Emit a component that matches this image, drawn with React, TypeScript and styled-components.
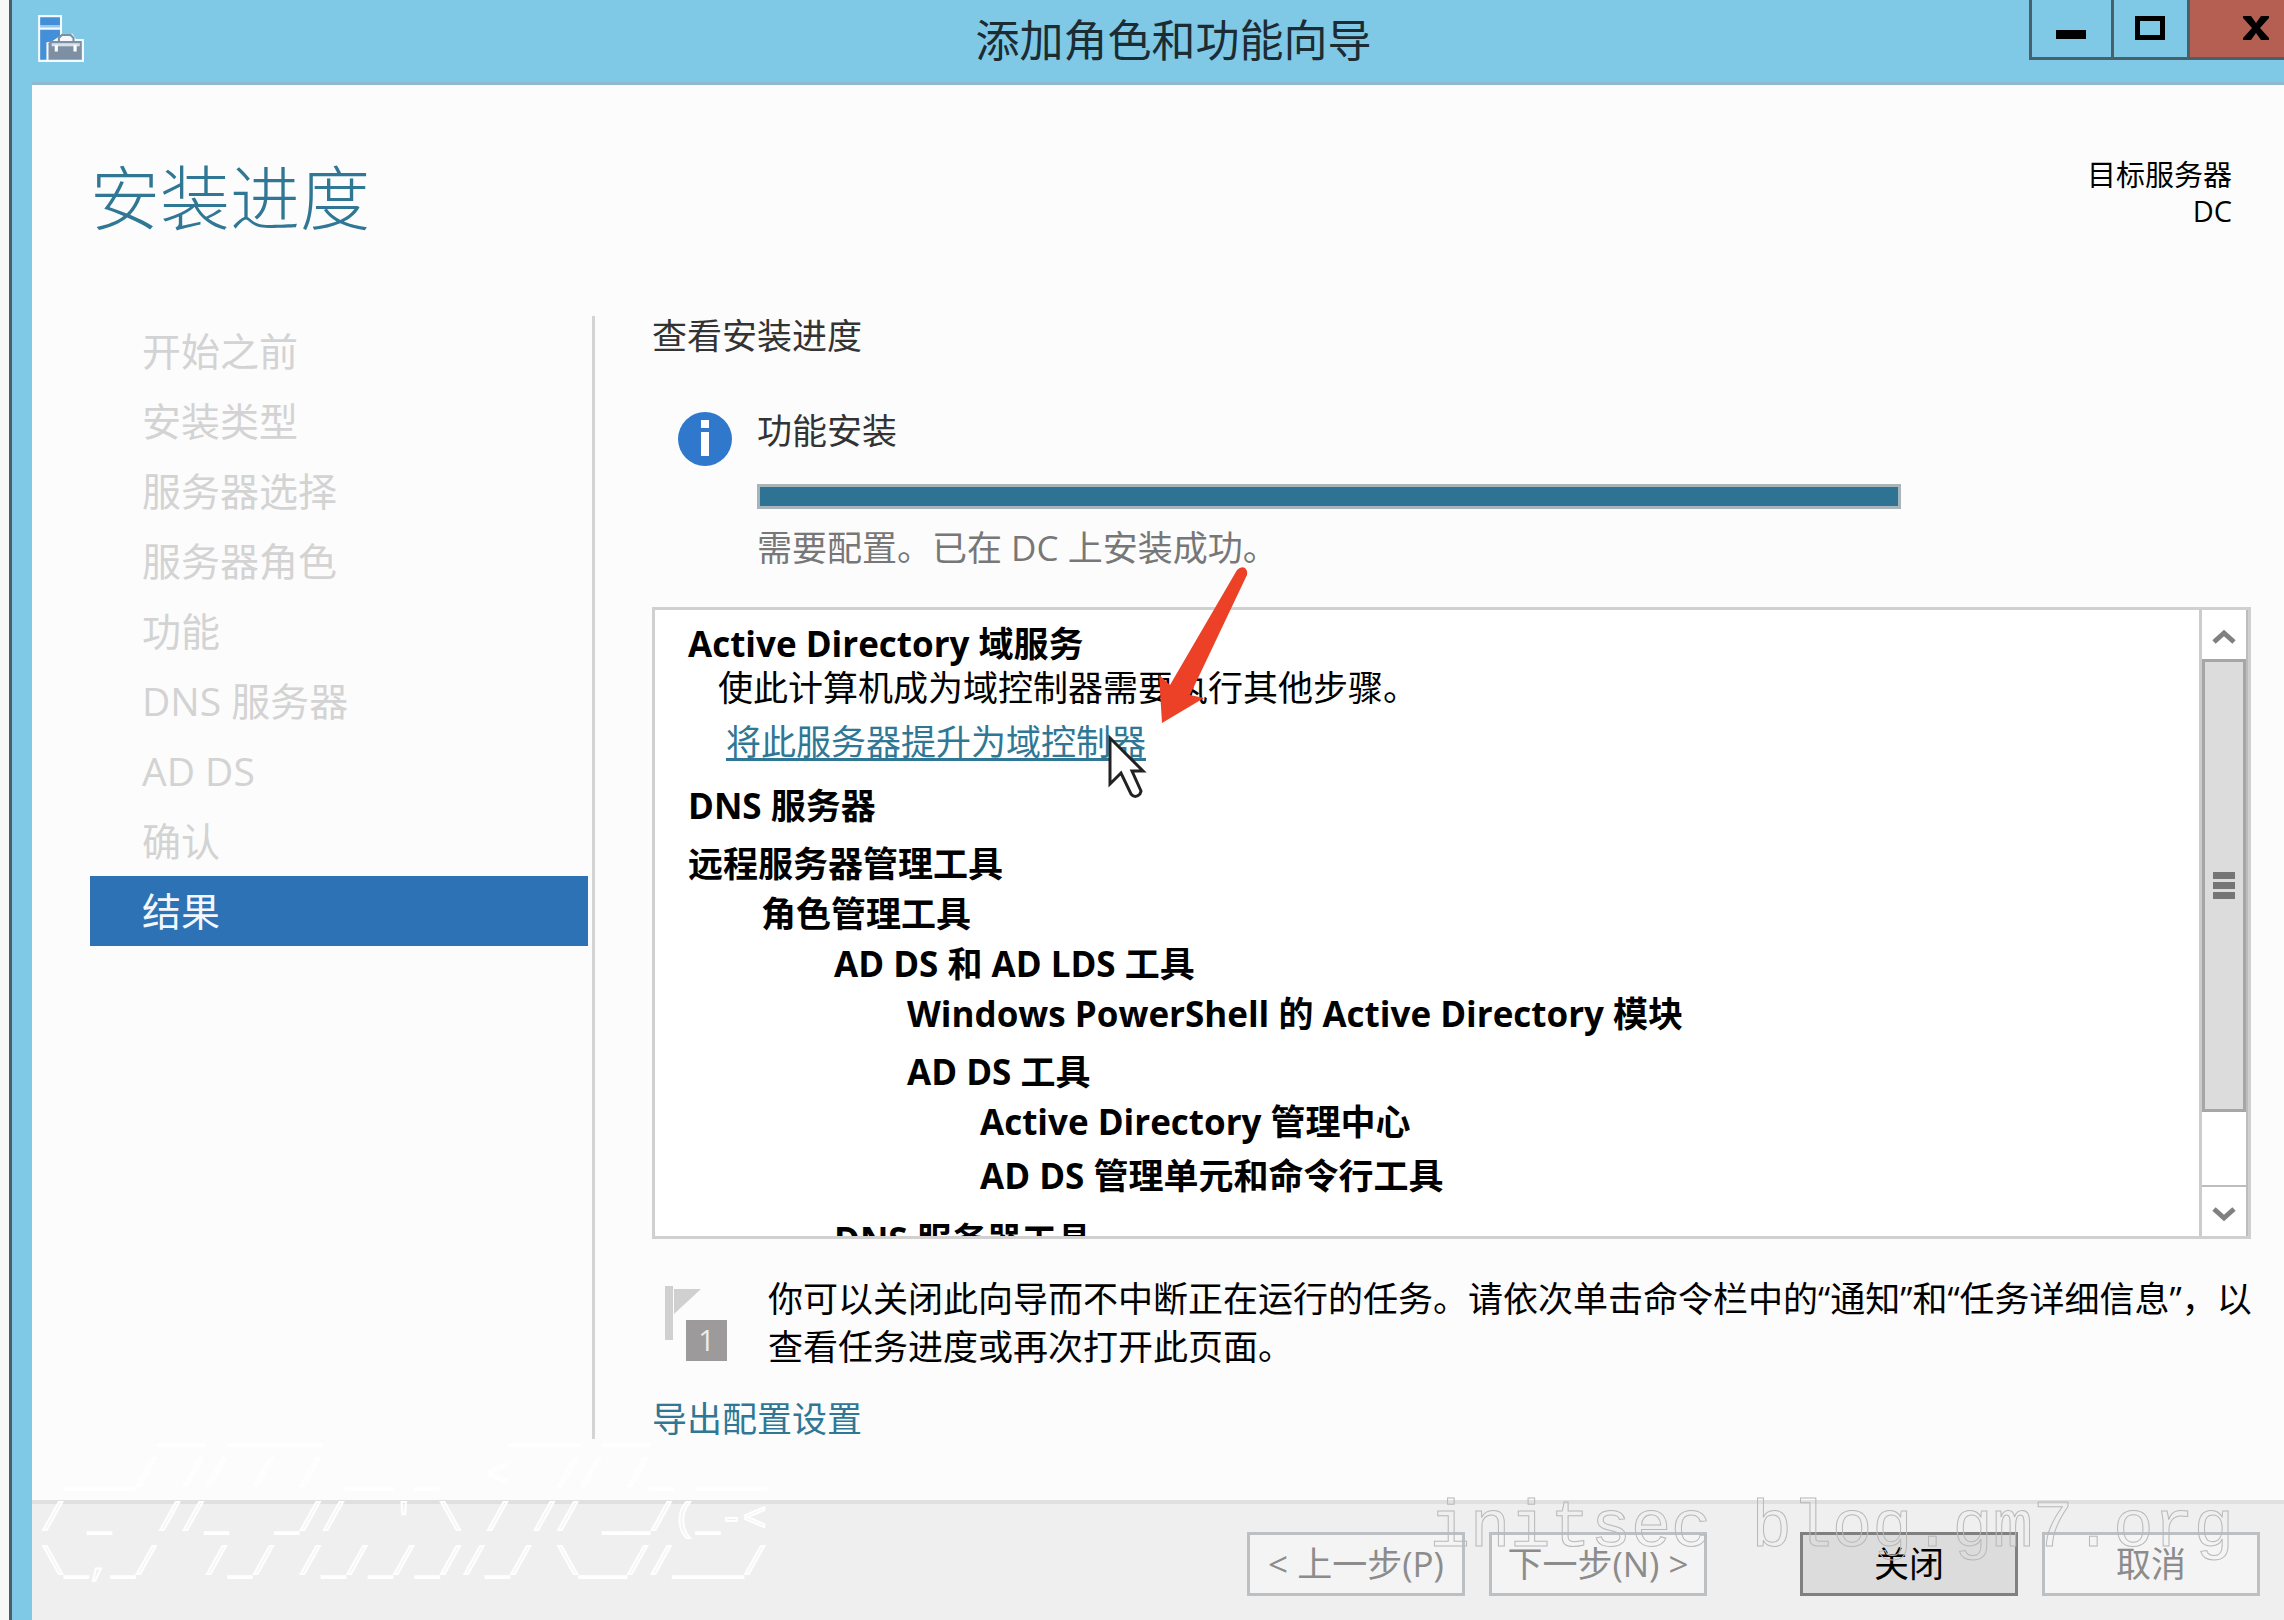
import React from "react";
import styled, { createGlobalStyle, css } from "styled-components";

const sans = `"Open Sans", "Noto Sans CJK SC", sans-serif`;

const color = {
  frame: "#7fc9e6",
  page: "#fcfcfc",
  accent: "#2f7795",
  selected: "#2d72b5",
  line: "#d0d0d0",
};

const GlobalStyle = createGlobalStyle`
  *, *::before, *::after { box-sizing: border-box; }
  body {
    margin: 0;
    background: #f8f8f8;
    font-family: ${sans};
    font-size: 35px;
    line-height: 40px;
    color: #000;
  }
  h1, h2, p, ul { margin: 0; padding: 0; font-weight: inherit; font-size: inherit; }
  ul { list-style: none; }
  button { font: inherit; color: inherit; padding: 0; margin: 0; }
`;

const Screen = styled.div`
  position: relative;
  min-height: 100vh;
  padding-left: 9px;
  display: flex;
  overflow: hidden;
`;

const Window = styled.div`
  flex: 1;
  min-width: 0;
  display: flex;
  flex-direction: column;
  padding-left: 20px;
  border-left: 3px solid #48606a;
  background: ${color.frame};
`;

const TitleBar = styled.header`
  display: flex;
  align-items: flex-start;
  height: 85px;
  border-bottom: 3px solid #8db8cf;
`;

const AppIcon = styled.svg`
  width: 50px;
  height: 50px;
  margin: 14px 0 0 4px;
`;

const Title = styled.h1`
  flex: 1;
  padding: 16px 0 0 232px;
  font-size: 44px;
  line-height: 48px;
  text-align: center;
  color: #1c2c33;
`;

const WindowButtons = styled.div`
  display: flex;
  height: 60px;
  border-bottom: 3px solid #48606a;
`;

const WindowButton = styled.button<{ $width: number; $close?: boolean }>`
  width: ${(p) => p.$width}px;
  border: 0;
  border-left: 3px solid #48606a;
  background: ${(p) => (p.$close ? "#b55f52" : color.frame)};
  display: flex;
  align-items: center;
  justify-content: ${(p) => (p.$close ? "flex-end" : "center")};
  padding: 0 ${(p) => (p.$close ? 13 : 2)}px 2px 0;
`;

const Glyph = styled.svg`
  width: 30px;
  height: 28px;
  display: block;
`;

const Body = styled.div`
  flex: 1;
  padding: 0 24px 58px 58px;
  background: ${color.page};
`;

const PageHeader = styled.div`
  display: flex;
  justify-content: space-between;
  align-items: flex-start;
  padding: 72px 28px 83px 0;
`;

const PageTitle = styled.h2`
  padding-top: 6px;
  font-size: 70px;
  line-height: 70px;
  font-weight: 300;
  color: ${color.accent};
`;

const Target = styled.p`
  font-size: 29px;
  line-height: 36px;
  text-align: right;
`;

const Columns = styled.div`
  display: flex;
`;

const Steps = styled.ul`
  flex: none;
  width: 505px;
  padding-right: 4px;
  border-right: 3px solid #d4d4d4;
`;

const Step = styled.li<{ $current?: boolean }>`
  height: 70px;
  padding-left: 52px;
  font-size: 39px;
  line-height: 70px;
  color: ${(p) => (p.$current ? "#f2f7fc" : "#d3d3d3")};
  background: ${(p) => (p.$current ? color.selected : "transparent")};
`;

const Main = styled.main`
  flex: 1;
  min-width: 0;
  padding-left: 57px;
`;

const Caption = styled.p`
  color: #333;
`;

const Status = styled.section`
  display: flex;
  align-items: flex-start;
  gap: 24px;
  padding: 55px 0 39px 25px;
`;

const InfoIcon = styled.svg`
  flex: none;
  width: 56px;
  height: 56px;
`;

const StatusBody = styled.div`
  flex: 1;
  max-width: 1144px;
  color: #333;
`;

const Progress = styled.div`
  height: 25px;
  margin: 33px 0 19px;
  border: 3px solid #a9b4b9;
  background: #2f7394;
`;

const Muted = styled.p`
  color: #777;
`;

const ListBox = styled.section`
  display: flex;
  height: 632px;
  margin-right: 9px;
  border: 3px solid ${color.line};
  background: #fff;
`;

const ListView = styled.ul`
  flex: 1;
  min-width: 0;
  overflow: hidden;
  padding: 16px 0 0 33px;
`;

const ListLine = styled.li<{ $level?: number; $gap: number; $note?: boolean }>`
  line-height: 36px;
  margin-bottom: ${(p) => p.$gap}px;
  padding-left: ${(p) => (p.$level || 0) * 73}px;
  font-weight: 700;
  ${(p) =>
    p.$note &&
    css`
      padding-left: 30px;
      font-weight: 400;
    `}
`;

const Link = styled.a<{ $underline?: boolean }>`
  color: ${color.accent};
  text-decoration: ${(p) => (p.$underline ? "underline" : "none")};
  text-decoration-thickness: 3px;
  text-underline-offset: 3px;
`;

const Promote = styled(Link)`
  margin-left: 8px;
`;

const Scrollbar = styled.div`
  width: 49px;
  display: flex;
  flex-direction: column;
  border-left: 3px solid #ccc;
  border-right: 2px solid #bdbdbd;
`;

const ScrollButton = styled.button`
  flex: none;
  height: 49px;
  border: 0;
  background: #fff;
  display: flex;
  align-items: center;
  justify-content: center;
  padding-top: 4px;
`;

const Track = styled.div`
  flex: 1;
  padding-bottom: 73px;
  border-bottom: 2px solid #bdbdbd;
  display: flex;
`;

const Thumb = styled.div`
  flex: 1;
  border: 3px solid #a6a6a6;
  background: #dcdcdc;
  display: flex;
  flex-direction: column;
  align-items: center;
  justify-content: center;
  gap: 3px;
`;

const Grip = styled.span`
  width: 22px;
  height: 7px;
  background: #757575;
`;

const Arrow = styled.svg`
  width: 24px;
  height: 16px;
`;

const Notice = styled.section`
  display: flex;
  align-items: flex-start;
  gap: 41px;
  padding: 36px 0 28px 13px;
  line-height: 48px;
`;

const FlagIcon = styled.div`
  position: relative;
  flex: none;
  width: 62px;
  height: 75px;
  margin-top: 11px;
`;

const Flag = styled.svg`
  display: block;
  width: 40px;
  height: 56px;
`;

const Badge = styled.span`
  position: absolute;
  right: 0;
  bottom: 0;
  width: 41px;
  height: 41px;
  background: #9d9a9c;
  color: #eee;
  font-size: 29px;
  line-height: 40px;
  text-align: center;
`;

const Footer = styled.footer`
  display: flex;
  justify-content: flex-end;
  gap: 24px;
  padding: 28px 24px 24px;
  border-top: 4px solid #e0e0e0;
  background: #efefef;
`;

const FooterButton = styled.button<{ $primary?: boolean }>`
  width: 218px;
  height: 64px;
  border: 3px solid ${(p) => (p.$primary ? "#808080" : "#bcc0c3")};
  background: ${(p) => (p.$primary ? "#dcdcdc" : "#f4f4f4")};
  color: ${(p) => (p.$primary ? "#000" : "#8c8c8c")};
  margin-left: ${(p) => (p.$primary ? 69 : 0)}px;
  white-space: nowrap;
`;

const AsciiArt = styled.pre`
  position: absolute;
  left: 41px;
  bottom: 34px;
  margin: 0;
  font-family: "Liberation Mono", monospace;
  font-size: 39px;
  line-height: 44px;
  color: transparent;
  -webkit-text-stroke: 2px #fff;
  pointer-events: none;
`;

const Watermark = styled.p`
  position: absolute;
  right: 50px;
  bottom: 56px;
  font-family: "Liberation Mono", monospace;
  font-size: 67px;
  line-height: 72px;
  color: transparent;
  -webkit-text-stroke: 1px #b8b8b8;
  white-space: pre;
  pointer-events: none;
`;

const Pointer = styled.svg`
  position: absolute;
  left: 1100px;
  top: 560px;
  width: 160px;
  height: 240px;
  pointer-events: none;
`;

const steps = [
  "开始之前",
  "安装类型",
  "服务器选择",
  "服务器角色",
  "功能",
  "DNS 服务器",
  "AD DS",
  "确认",
  "结果",
];

const features = [
  { text: "DNS 服务器", level: 0, gap: 22 },
  { text: "远程服务器管理工具", level: 0, gap: 14 },
  { text: "角色管理工具", level: 1, gap: 14 },
  { text: "AD DS 和 AD LDS 工具", level: 2, gap: 14 },
  { text: "Windows PowerShell 的 Active Directory 模块", level: 3, gap: 22 },
  { text: "AD DS 工具", level: 3, gap: 14 },
  { text: "Active Directory 管理中心", level: 4, gap: 18 },
  { text: "AD DS 管理单元和命令行工具", level: 4, gap: 28 },
  { text: "DNS 服务器工具", level: 2, gap: 14 },
];

const art = [
  "     __ ____        ___ __",
  " ___/ // / / __ _  <  // /_ ___",
  "/ _  //_  _//  ' \\ / // __/(_-<",
  "\\_,_/  /_/ /_/_/_//_/ \\__//___/",
].join("\n");

export default function App() {
  return (
    <Screen>
      <GlobalStyle />
      <Window>
        <TitleBar>
          <AppIcon viewBox="0 0 48 48" aria-hidden="true">
            <path d="M2 1h23v19h6l3 4h12v22H2z" fill="#f3f9fd" />
            <path d="M4 3h19v8H4zM4 15h19v6l-9 6v17H4z" fill="#438fd8" />
            <path d="M4 11h19v2H4z" fill="#9cc6ea" />
            <path d="M10 27l10-1 4-7h11l4 6 7 1v20H10z" fill="#f3f9fd" />
            <path d="M22 26v-3l3-3h8l3 3v3" fill="none" stroke="#7d90a3" strokeWidth="2" />
            <path d="M14 26h30v18H12V28z" fill="#7d90a3" />
            <path d="M15 28h27v3H15z" fill="#d8dfe6" />
            <path d="M18 30h3v6h-3zM36 30h3v6h-3z" fill="#fff" />
          </AppIcon>
          <Title>添加角色和功能向导</Title>
          <WindowButtons>
            <WindowButton $width={82} aria-label="最小化">
              <Glyph viewBox="0 0 30 28">
                <path d="M0 16h30v9H0z" />
              </Glyph>
            </WindowButton>
            <WindowButton $width={76} aria-label="最大化">
              <Glyph viewBox="0 0 30 28">
                <path d="M2.5 4.5h25v19h-25z" fill="none" stroke="#000" strokeWidth="5" />
              </Glyph>
            </WindowButton>
            <WindowButton $width={97} $close aria-label="关闭窗口">
              <Glyph viewBox="0 0 30 28">
                <path d="M2 2h8l5 7 5-7h8v2l-9 10 9 10v2h-8l-5-7-5 7H2v-2l9-10L2 4z" />
              </Glyph>
            </WindowButton>
          </WindowButtons>
        </TitleBar>

        <Body>
          <PageHeader>
            <PageTitle>安装进度</PageTitle>
            <Target>
              目标服务器
              <br />
              DC
            </Target>
          </PageHeader>

          <Columns>
            <Steps>
              {steps.map((s) => (
                <Step key={s} $current={s === "结果"}>
                  {s}
                </Step>
              ))}
            </Steps>

            <Main>
              <Caption>查看安装进度</Caption>
              <Status>
                <InfoIcon viewBox="0 0 56 56" aria-hidden="true">
                  <circle cx="28" cy="28" r="27" fill="#2f78cb" />
                  <path d="M24 9h8v8h-8zM24 21h8v24h-8z" fill="#fff" />
                </InfoIcon>
                <StatusBody>
                  <p>功能安装</p>
                  <Progress role="progressbar" aria-label="功能安装" aria-valuenow={100} />
                  <Muted>需要配置。已在 DC 上安装成功。</Muted>
                </StatusBody>
              </Status>

              <ListBox>
                <ListView>
                  <ListLine $gap={8}>Active Directory 域服务</ListLine>
                  <ListLine $gap={18} $note>
                    使此计算机成为域控制器需要执行其他步骤。
                  </ListLine>
                  <ListLine $gap={28} $note>
                    <Promote href="#promote" $underline>
                      将此服务器提升为域控制器
                    </Promote>
                  </ListLine>
                  {features.map((f) => (
                    <ListLine key={f.text} $level={f.level} $gap={f.gap}>
                      {f.text}
                    </ListLine>
                  ))}
                </ListView>
                <Scrollbar>
                  <ScrollButton aria-label="向上滚动">
                    <Arrow viewBox="0 0 24 16">
                      <path d="M2 13l10-9 10 9" fill="none" stroke="#808080" strokeWidth="5" />
                    </Arrow>
                  </ScrollButton>
                  <Track>
                    <Thumb>
                      <Grip />
                      <Grip />
                      <Grip />
                    </Thumb>
                  </Track>
                  <ScrollButton aria-label="向下滚动">
                    <Arrow viewBox="0 0 24 16">
                      <path d="M2 3l10 9 10-9" fill="none" stroke="#808080" strokeWidth="5" />
                    </Arrow>
                  </ScrollButton>
                </Scrollbar>
              </ListBox>

              <Notice>
                <FlagIcon>
                  <Flag viewBox="0 0 40 56" aria-hidden="true">
                    <path d="M0 0h8v54H0z" fill="#d0d0d0" />
                    <path d="M9 3h27L9 28z" fill="#d0d0d0" />
                  </Flag>
                  <Badge>1</Badge>
                </FlagIcon>
                <p>
                  你可以关闭此向导而不中断正在运行的任务。请依次单击命令栏中的“通知”和“任务详细信息”，以查看任务进度或再次打开此页面。
                </p>
              </Notice>
              <Link href="#export">导出配置设置</Link>
            </Main>
          </Columns>
        </Body>

        <Footer>
          <FooterButton disabled>&lt; 上一步(P)</FooterButton>
          <FooterButton disabled>下一步(N) &gt;</FooterButton>
          <FooterButton $primary>关闭</FooterButton>
          <FooterButton disabled>取消</FooterButton>
        </Footer>
      </Window>

      <AsciiArt>{art}</AsciiArt>
      <Watermark>initsec blog.gm7.org</Watermark>

      <Pointer viewBox="0 0 160 240" aria-hidden="true">
        <path
          d="M137 10Q141 6 145 8Q149 12 146 17L90 135L104 138L62 163L59 115L70 125Z"
          fill="#ec4127"
        />
        <path
          d="M10 178v46l11-11 10 21q4 5 9 0l1-3-9-20h11z"
          fill="#fff"
          stroke="#222"
          strokeWidth="3"
        />
      </Pointer>
    </Screen>
  );
}
